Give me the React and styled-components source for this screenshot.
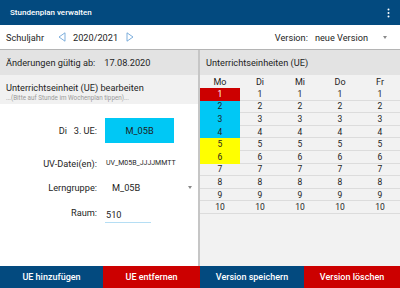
import React from "react";
import styled, { createGlobalStyle } from "styled-components";

const GlobalStyle = createGlobalStyle`
  html, body {
    margin: 0;
    padding: 0;
    background: #ffffff;
  }
  body {
    font-family: Roboto, "Noto Sans", sans-serif;
    color: #1e1e1e;
  }
  * {
    box-sizing: border-box;
  }
`;

const Screen = styled.div`
  width: 400px;
  height: 288px;
  display: flex;
  flex-direction: column;
  overflow: hidden;
`;

const AppBar = styled.header`
  height: 25px;
  flex: none;
  background: #034a7f;
  color: #ffffff;
  display: flex;
  align-items: center;
  justify-content: space-between;
  padding: 0 10px 0 10px;
  font-size: 8px;
  font-weight: 500;
`;

const Toolbar = styled.div`
  height: 25px;
  flex: none;
  display: flex;
  align-items: center;
  justify-content: space-between;
  padding: 0 13px 0 6px;
  border-bottom: 1px solid #b4b4b4;
  font-size: 9.2px;
`;

const Group = styled.div`
  display: flex;
  align-items: center;
`;

const NavArrow = styled.svg`
  width: 8px;
  height: 10px;
  margin: ${(p) => p.$margin};
`;

const SmallCaret = styled.span`
  width: 0;
  height: 0;
  border-left: 2.5px solid transparent;
  border-right: 2.5px solid transparent;
  border-top: 3px solid #8a8a8a;
  margin-left: ${(p) => p.$offset}px;
`;

const Main = styled.div`
  flex: 1;
  display: flex;
  min-height: 0;
`;

const LeftPane = styled.section`
  width: 200px;
  border-right: 2px solid #c6c6c6;
  display: flex;
  flex-direction: column;
`;

const RightPane = styled.section`
  width: 200px;
  background: #f2f2f2;
  display: flex;
  flex-direction: column;
`;

const SectionHeader = styled.div`
  height: 25px;
  flex: none;
  background: #e3e3e3;
  display: flex;
  align-items: center;
  padding-left: 6px;
  gap: 9px;
  font-size: 9.2px;
`;

const EditHeader = styled.div`
  height: 29px;
  flex: none;
  background: #f1f1f1;
  padding: 7px 0 0 6px;
`;

const EditTitle = styled.div`
  font-size: 9.2px;
  line-height: 11px;
`;

const Hint = styled.div`
  font-size: 6.3px;
  line-height: 8px;
  color: #9a9a9a;
  margin-top: 1px;
`;

const Form = styled.div`
  flex: 1;
  background: #ffffff;
  padding-top: 14px;
  display: flex;
  flex-direction: column;
`;

const FormRow = styled.div`
  display: grid;
  grid-template-columns: 97px 1fr;
  column-gap: 8px;
  align-items: center;
  height: ${(p) => p.$h}px;
  margin-top: ${(p) => p.$mt || 0}px;
`;

const Label = styled.div`
  text-align: right;
  font-size: 9.2px;
  white-space: pre;
`;

const UeBox = styled.div`
  width: 69px;
  height: 25px;
  background: #00c8f5;
  display: flex;
  align-items: center;
  justify-content: center;
  font-size: 9.2px;
`;

const FileValue = styled.div`
  font-size: 7px;
  padding-left: 1px;
`;

const SelectValue = styled.div`
  display: flex;
  align-items: center;
  font-size: 9.2px;
  padding-left: 7px;
`;

const RoomInput = styled.div`
  width: 46px;
  font-size: 9.2px;
  padding: 5px 0 2px 1px;
  border-bottom: 1px solid #b5def4;
  margin-top: 2px;
`;

const Table = styled.div`
  display: grid;
  grid-template-columns: repeat(5, 40px);
`;

const HeadCell = styled.div`
  height: 13px;
  display: flex;
  align-items: center;
  justify-content: center;
  font-size: 9px;
  padding-top: 1px;
`;

const Cell = styled.div`
  height: 12.6px;
  display: flex;
  align-items: center;
  justify-content: center;
  font-size: 8.5px;
  background: ${(p) => p.$bg || "transparent"};
  color: ${(p) => (p.$bg === "#cc0000" ? "#ffffff" : "#1e1e1e")};
  border-bottom: 1px solid ${(p) => p.$bg || "#dcdcdc"};
`;

const BottomBar = styled.div`
  height: 22px;
  flex: none;
  display: grid;
  grid-template-columns: 103px 97px 104px 96px;
`;

const ActionButton = styled.button`
  border: none;
  margin: 0;
  padding: 0;
  background: ${(p) => (p.$danger ? "#cc0000" : "#034a7f")};
  color: #ffffff;
  font-family: Roboto, "Noto Sans", sans-serif;
  font-size: 9px;
  font-weight: 500;
  display: flex;
  align-items: center;
  justify-content: center;
`;

const days = ["Mo", "Di", "Mi", "Do", "Fr"];
const mondayColors = {
  1: "#cc0000",
  2: "#00c8f5",
  3: "#00c8f5",
  4: "#00c8f5",
  5: "#ffff00",
  6: "#ffff00",
};

function Kebab() {
  return (
    <svg width="3" height="10" viewBox="0 0 3 10">
      <circle cx="1.5" cy="1.5" r="1" fill="#fff" />
      <circle cx="1.5" cy="5" r="1" fill="#fff" />
      <circle cx="1.5" cy="8.5" r="1" fill="#fff" />
    </svg>
  );
}

function Arrow({ dir, margin }) {
  const pts = dir === "left" ? "7,0.8 7,9.2 1,5" : "1,0.8 1,9.2 7,5";
  return (
    <NavArrow viewBox="0 0 8 10" $margin={margin}>
      <polygon points={pts} fill="none" stroke="#6fa6d8" strokeWidth="0.9" strokeLinejoin="round" />
    </NavArrow>
  );
}

export default function App() {
  const rows = Array.from({ length: 10 }, (_, i) => i + 1);
  return (
    <>
      <GlobalStyle />
      <Screen>
        <AppBar>
          <span>Stundenplan verwalten</span>
          <Kebab />
        </AppBar>

        <Toolbar>
          <Group>
            <span>Schuljahr</span>
            <Arrow dir="left" margin="0 7px 0 14px" />
            <span>2020/2021</span>
            <Arrow dir="right" margin="0 0 0 8px" />
          </Group>
          <Group>
            <span>Version:</span>
            <span style={{ marginLeft: 7 }}>neue Version</span>
            <SmallCaret $offset={15} />
          </Group>
        </Toolbar>

        <Main>
          <LeftPane>
            <SectionHeader>
              <span>Änderungen gültig ab:</span>
              <span>17.08.2020</span>
            </SectionHeader>
            <EditHeader>
              <EditTitle>Unterrichtseinheit (UE) bearbeiten</EditTitle>
              <Hint>...(Bitte auf Stunde im Wochenplan tippen)...</Hint>
            </EditHeader>
            <Form>
              <FormRow $h={25}>
                <Label>{"Di   3. UE:"}</Label>
                <UeBox>M_05B</UeBox>
              </FormRow>
              <FormRow $h={24} $mt={8}>
                <Label>UV-Datei(en):</Label>
                <FileValue>UV_M05B_JJJJMMTT</FileValue>
              </FormRow>
              <FormRow $h={25}>
                <Label>Lerngruppe:</Label>
                <SelectValue>
                  <span>M_05B</span>
                  <SmallCaret $offset={48} />
                </SelectValue>
              </FormRow>
              <FormRow $h={24}>
                <Label>Raum:</Label>
                <RoomInput>510</RoomInput>
              </FormRow>
            </Form>
          </LeftPane>

          <RightPane>
            <SectionHeader>Unterrichtseinheiten (UE)</SectionHeader>
            <Table>
              {days.map((d) => (
                <HeadCell key={d}>{d}</HeadCell>
              ))}
              {rows.map((r) =>
                days.map((d, i) => (
                  <Cell key={d + r} $bg={i === 0 ? mondayColors[r] : undefined}>
                    {r}
                  </Cell>
                ))
              )}
            </Table>
          </RightPane>
        </Main>

        <BottomBar>
          <ActionButton>UE hinzufügen</ActionButton>
          <ActionButton $danger>UE entfernen</ActionButton>
          <ActionButton>Version speichern</ActionButton>
          <ActionButton $danger>Version löschen</ActionButton>
        </BottomBar>
      </Screen>
    </>
  );
}
